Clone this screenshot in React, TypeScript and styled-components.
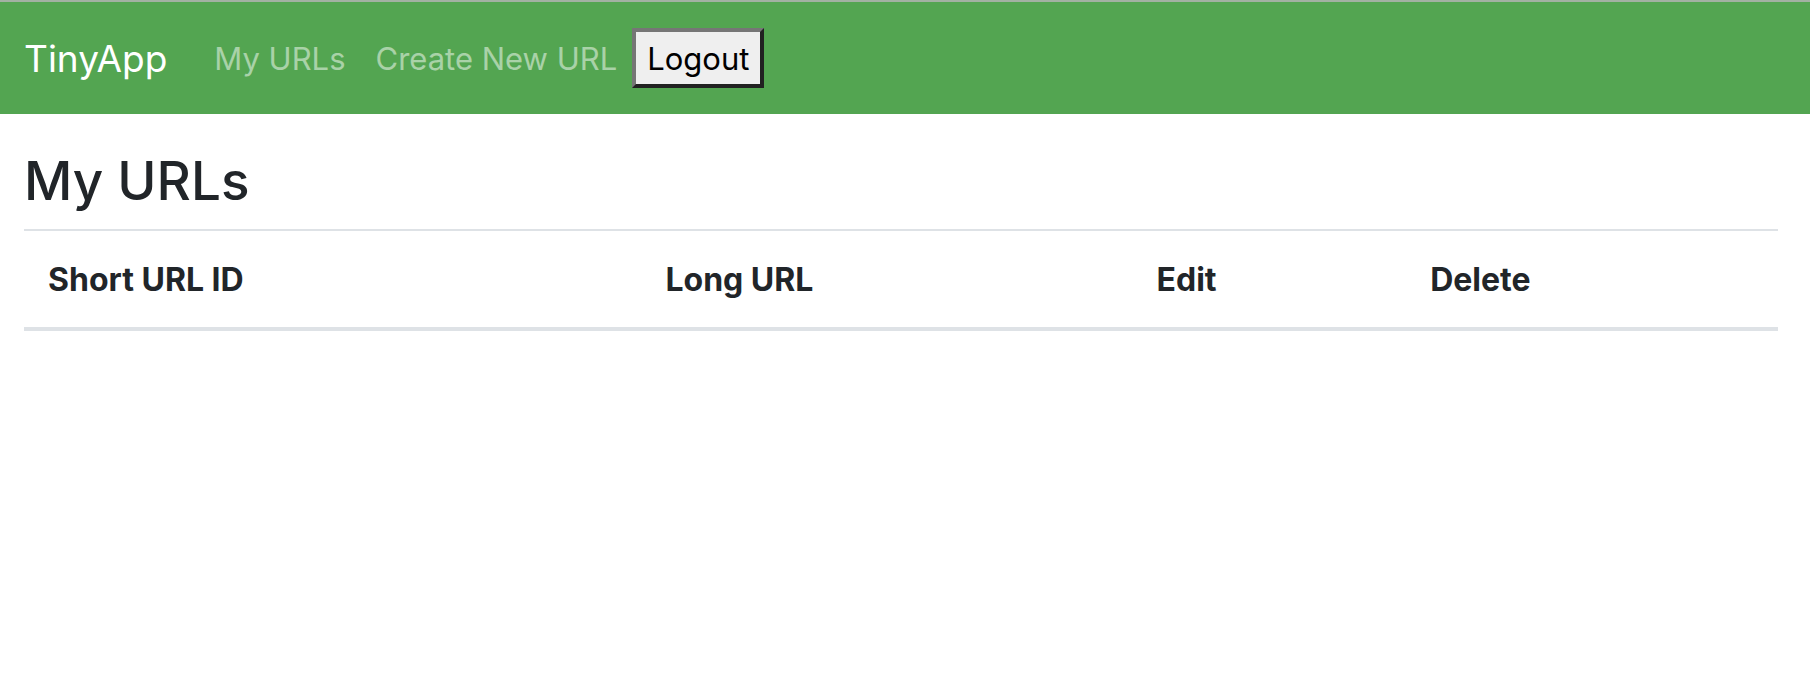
import React from "react";
import styled, { createGlobalStyle } from "styled-components";

const GlobalStyle = createGlobalStyle`
  *, *::before, *::after { box-sizing: border-box; }
  body {
    margin: 0;
    background: #fff;
    color: #212529;
    font-family: Inter, "Liberation Sans", sans-serif;
    font-size: 32px;
    line-height: 48px;
  }
`;

const Navbar = styled.nav`
  display: flex;
  align-items: center;
  padding: 16px 24px;
  background: #53a551;
  border-top: 2px solid #a2b1a2;
  font-size: 31px;
`;

const Brand = styled.a`
  margin-right: 32px;
  padding-top: 2px;
  color: #fff;
  font-size: 37px;
  line-height: 60px;
  text-decoration: none;
`;

const NavLink = styled.a`
  padding: 17px 15px 15px;
  color: rgba(255, 255, 255, 0.5);
  text-decoration: none;
`;

const LogoutButton = styled.button`
  padding: 3px 11px 1px;
  border: 4px outset #767676;
  background: #efefef;
  color: #000;
  font: inherit;
`;

const Main = styled.main`
  padding: 32px 32px 0 24px;
`;

const Title = styled.h1`
  margin: 0 0 12px;
  font-size: 53px;
  font-weight: 500;
  line-height: 71px;
`;

const Table = styled.table`
  width: 100%;
  border-collapse: collapse;
`;

const HeadCell = styled.th<{ $width: string }>`
  width: ${({ $width }) => $width};
  padding: 25px 24px 23px;
  border-top: 2px solid #dee2e6;
  border-bottom: 4px solid #dee2e6;
  font-weight: 700;
  text-align: left;
`;

const columns = [
  { label: "Short URL ID", width: "35.2%" },
  { label: "Long URL", width: "28%" },
  { label: "Edit", width: "15.6%" },
  { label: "Delete", width: "21.2%" },
];

export default function App() {
  return (
    <>
      <GlobalStyle />
      <Navbar>
        <Brand href="#">TinyApp</Brand>
        <NavLink href="#urls">My URLs</NavLink>
        <NavLink href="#new">Create New URL</NavLink>
        <LogoutButton type="button">Logout</LogoutButton>
      </Navbar>
      <Main>
        <Title>My URLs</Title>
        <Table>
          <thead>
            <tr>
              {columns.map(({ label, width }) => (
                <HeadCell key={label} scope="col" $width={width}>{label}</HeadCell>
              ))}
            </tr>
          </thead>
        </Table>
      </Main>
    </>
  );
}
